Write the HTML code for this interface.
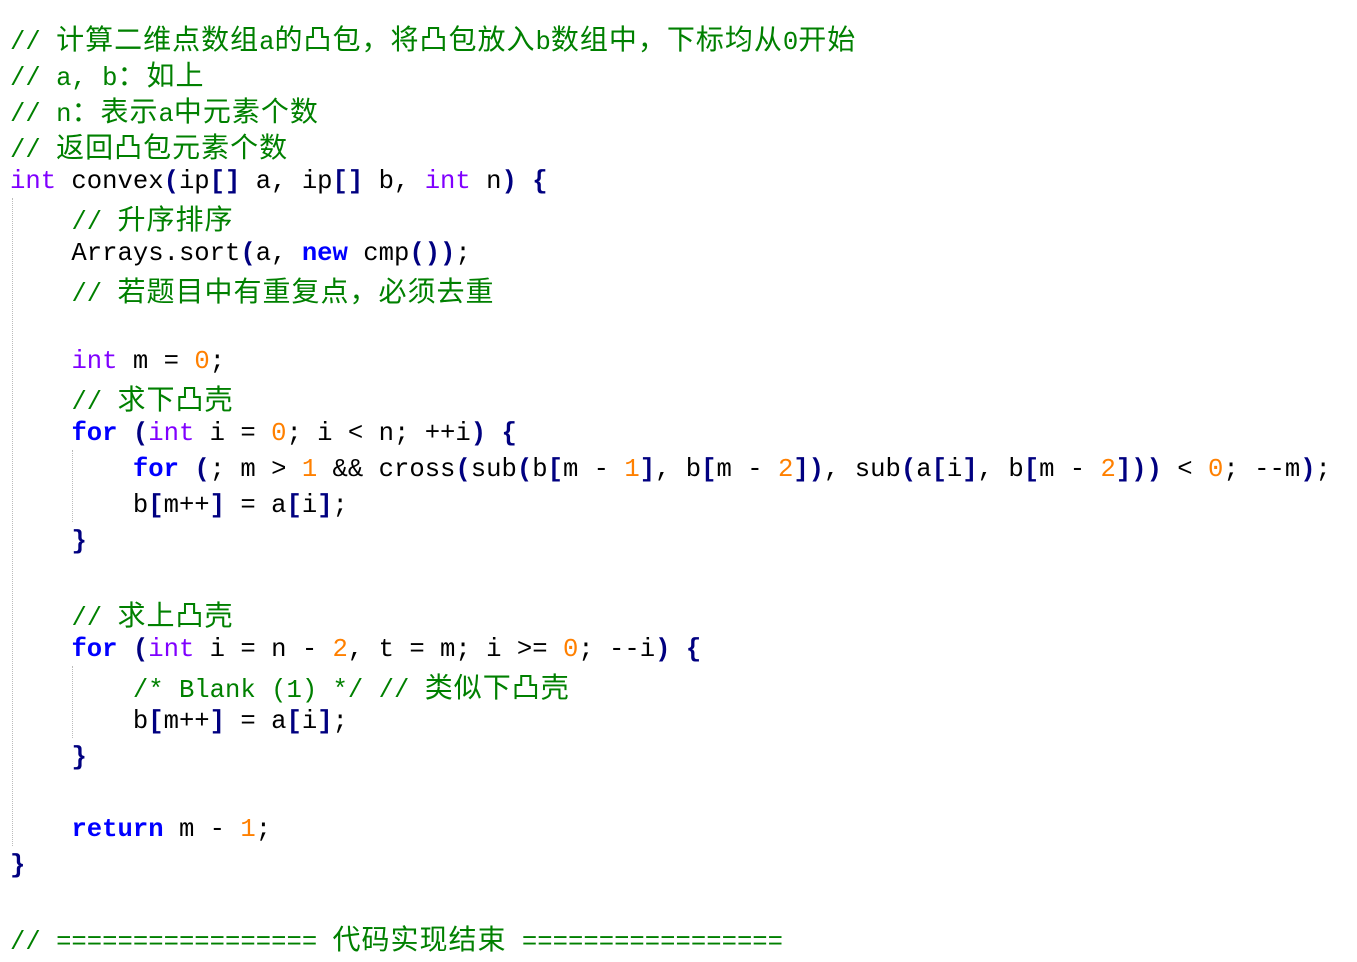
<!DOCTYPE html>
<html><head><meta charset="utf-8"><style>
html,body{margin:0;padding:0;background:#fff;width:1357px;height:962px;overflow:hidden;position:relative}
.code{position:absolute;left:10px;top:20px;font-family:"Liberation Mono",monospace;font-size:25.6px;color:#000}
.code div{height:36px;line-height:36px;white-space:pre;overflow:visible}
.c{color:#008000}
.z{font-family:"Noto Sans CJK SC",sans-serif;font-size:28px;letter-spacing:1px;line-height:36px}
.t{color:#8000ff}
.k{color:#0000ff;font-weight:bold}
.n{color:#ff8000}
.b{color:#000080;font-weight:bold}
.g{position:absolute;border-left:1px dotted #bbb;width:0}
</style></head><body>
<div class="g" style="left:12px;top:198px;height:648px"></div>
<div class="g" style="left:72px;top:450px;height:72px"></div>
<div class="g" style="left:72px;top:666px;height:72px"></div>
<div class="code">
<div><span class="c">// <span class="z">计算二维点数组</span>a<span class="z">的凸包，将凸包放入</span>b<span class="z">数组中，下标均从</span>0<span class="z">开始</span></span></div>
<div><span class="c">// a, b<span class="z">：如上</span></span></div>
<div><span class="c">// n<span class="z">：表示</span>a<span class="z">中元素个数</span></span></div>
<div><span class="c">// <span class="z">返回凸包元素个数</span></span></div>
<div><span class="t">int</span> convex<span class="b">(</span>ip<span class="b">[]</span> a, ip<span class="b">[]</span> b, <span class="t">int</span> n<span class="b">)</span> <span class="b">{</span></div>
<div>    <span class="c">// <span class="z">升序排序</span></span></div>
<div>    Arrays.sort<span class="b">(</span>a, <span class="k">new</span> cmp<span class="b">())</span>;</div>
<div>    <span class="c">// <span class="z">若题目中有重复点，必须去重</span></span></div>
<div> </div>
<div>    <span class="t">int</span> m = <span class="n">0</span>;</div>
<div>    <span class="c">// <span class="z">求下凸壳</span></span></div>
<div>    <span class="k">for</span> <span class="b">(</span><span class="t">int</span> i = <span class="n">0</span>; i &lt; n; ++i<span class="b">)</span> <span class="b">{</span></div>
<div>        <span class="k">for</span> <span class="b">(</span>; m &gt; <span class="n">1</span> &amp;&amp; cross<span class="b">(</span>sub<span class="b">(</span>b<span class="b">[</span>m - <span class="n">1</span><span class="b">]</span>, b<span class="b">[</span>m - <span class="n">2</span><span class="b">])</span>, sub<span class="b">(</span>a<span class="b">[</span>i<span class="b">]</span>, b<span class="b">[</span>m - <span class="n">2</span><span class="b">]))</span> &lt; <span class="n">0</span>; --m<span class="b">)</span>;</div>
<div>        b<span class="b">[</span>m++<span class="b">]</span> = a<span class="b">[</span>i<span class="b">]</span>;</div>
<div>    <span class="b">}</span></div>
<div> </div>
<div>    <span class="c">// <span class="z">求上凸壳</span></span></div>
<div>    <span class="k">for</span> <span class="b">(</span><span class="t">int</span> i = n - <span class="n">2</span>, t = m; i &gt;= <span class="n">0</span>; --i<span class="b">)</span> <span class="b">{</span></div>
<div>        <span class="c">/* Blank (1) */ // <span class="z">类似下凸壳</span></span></div>
<div>        b<span class="b">[</span>m++<span class="b">]</span> = a<span class="b">[</span>i<span class="b">]</span>;</div>
<div>    <span class="b">}</span></div>
<div> </div>
<div>    <span class="k">return</span> m - <span class="n">1</span>;</div>
<div><span class="b">}</span></div>
<div> </div>
<div><span class="c">// ================= <span class="z">代码实现结束</span> =================</span></div>
</div>
</body></html>
